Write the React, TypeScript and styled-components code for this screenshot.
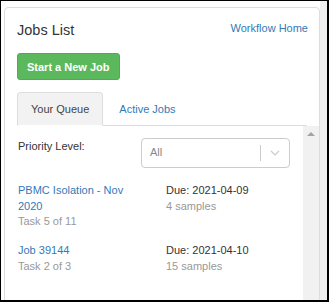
import React from "react";
import styled, { createGlobalStyle } from "styled-components";

const GlobalStyle = createGlobalStyle`
    body {
        margin: 0;
        font-family: "Liberation Sans", Arial, sans-serif;
        font-size: 11px;
        color: #333;
    }
`

const Frame = styled.div`
    width: 329px;
    height: 302px;
    box-sizing: border-box;
    border-style: solid;
    border-color: #000;
    border-width: 1px 2px 2px 1px;
    display: flex;
    overflow: hidden;
    background: #fff;
`

const Main = styled.div`
    flex: 1;
    padding: 6px 0 0 3px;
    min-width: 0;
`

const PageTrack = styled.div`
    width: 7px;
    background: #f0f0f0;
`

const Panel = styled.div`
    border: 1px solid #ddd;
    border-radius: 4px;
    height: 400px;
    display: flex;
    flex-direction: column;
`

const Header = styled.div`
    padding: 12px 11px 0 12px;
`

const TitleRow = styled.div`
    display: flex;
    justify-content: space-between;
    align-items: flex-start;
`

const Title = styled.h3`
    margin: 0;
    font-size: 14.5px;
    font-weight: normal;
    line-height: 20px;
    color: #333;
`

const Link = styled.a`
    color: #337ab7;
    text-decoration: none;
    cursor: pointer;
`

const HomeLink = styled(Link)`
    line-height: 16px;
`

const GreenButton = styled.button`
    margin-top: 13px;
    height: 27px;
    padding: 0 9px;
    border: 1px solid #4cae4c;
    border-radius: 3px;
    background: #5cb85c;
    color: #fff;
    font-family: inherit;
    font-size: 11px;
    font-weight: bold;
`

const Tabs = styled.div`
    display: flex;
    margin-top: 12px;
    margin-right: 1px;
    border-bottom: 1px solid #ddd;
`

const Tab = styled.div<{ $active?: boolean }>`
    height: 34px;
    box-sizing: border-box;
    padding: 0 ${(p) => (p.$active ? "13px" : "15px")};
    display: flex;
    align-items: center;
    margin-bottom: -1px;
    border: 1px solid ${(p) => (p.$active ? "#ddd" : "transparent")};
    border-bottom: 1px solid ${(p) => (p.$active ? "#fff" : "transparent")};
    border-radius: 4px 4px 0 0;
    background: ${(p) => (p.$active ? "#f2f2f2" : "transparent")};
    color: ${(p) => (p.$active ? "#444" : "#337ab7")};
`

const Body = styled.div`
    flex: 1;
    display: flex;
`

const Content = styled.div`
    flex: 1;
    padding: 12px 13px 0 13px;
    line-height: 1.42857;
`

const Scrollbar = styled.div`
    width: 16px;
    background: #f1f1f1;
    display: flex;
    justify-content: center;
    padding-top: 6px;
    box-sizing: border-box;
`

const UpArrow = styled.div`
    width: 0;
    height: 0;
    border-left: 4px solid transparent;
    border-right: 4px solid transparent;
    border-bottom: 4px solid #a3a3a3;
`

const FilterRow = styled.div`
    display: flex;
    justify-content: space-between;
    align-items: flex-start;
`

const FilterLabel = styled.span`
    line-height: 16px;
`

const Select = styled.div`
    width: 149px;
    height: 30px;
    box-sizing: border-box;
    border: 1px solid #ccc;
    border-radius: 4px;
    display: flex;
    align-items: center;
    padding-left: 8px;
    color: #888;
`

const SelectValue = styled.span`
    flex: 1;
`

const Separator = styled.span`
    width: 1px;
    height: 16px;
    background: #ccc;
`

const Chevron = styled.span`
    width: 28px;
    display: flex;
    justify-content: center;
`

const JobList = styled.div`
    display: flex;
    flex-direction: column;
    gap: 13px;
    margin-top: 15px;
`

const JobRow = styled.div`
    display: grid;
    grid-template-columns: 1fr 1fr;
    column-gap: 24px;
`

const Cell = styled.div`
    display: flex;
    flex-direction: column;
`

const Muted = styled.span`
    color: #999;
`

type Job = {
    name: string;
    task: string;
    due: string;
    samples: string;
}

const jobs: Job[] = [
    { name: "PBMC Isolation - Nov 2020", task: "Task 5 of 11", due: "2021-04-09", samples: "4 samples" },
    { name: "Job 39144", task: "Task 2 of 3", due: "2021-04-10", samples: "15 samples" },
]

const App: React.FC = () => {
    return (
        <Frame>
            <GlobalStyle />
            <Main>
                <Panel>
                    <Header>
                        <TitleRow>
                            <Title>Jobs List</Title>
                            <HomeLink>Workflow Home</HomeLink>
                        </TitleRow>
                        <GreenButton>Start a New Job</GreenButton>
                        <Tabs>
                            <Tab $active>Your Queue</Tab>
                            <Tab>Active Jobs</Tab>
                        </Tabs>
                    </Header>
                    <Body>
                        <Content>
                            <FilterRow>
                                <FilterLabel>Priority Level:</FilterLabel>
                                <Select>
                                    <SelectValue>All</SelectValue>
                                    <Separator />
                                    <Chevron>
                                        <svg width="10" height="6" viewBox="0 0 10 6">
                                            <polyline points="1,1 5,5 9,1" fill="none" stroke="#ccc" strokeWidth="1.2" />
                                        </svg>
                                    </Chevron>
                                </Select>
                            </FilterRow>
                            <JobList>
                                {jobs.map((job) => (
                                    <JobRow key={job.name}>
                                        <Cell>
                                            <Link>{job.name}</Link>
                                            <Muted>{job.task}</Muted>
                                        </Cell>
                                        <Cell>
                                            <span>Due: {job.due}</span>
                                            <Muted>{job.samples}</Muted>
                                        </Cell>
                                    </JobRow>
                                ))}
                            </JobList>
                        </Content>
                        <Scrollbar>
                            <UpArrow />
                        </Scrollbar>
                    </Body>
                </Panel>
            </Main>
            <PageTrack />
        </Frame>
    )
}

export default App;
